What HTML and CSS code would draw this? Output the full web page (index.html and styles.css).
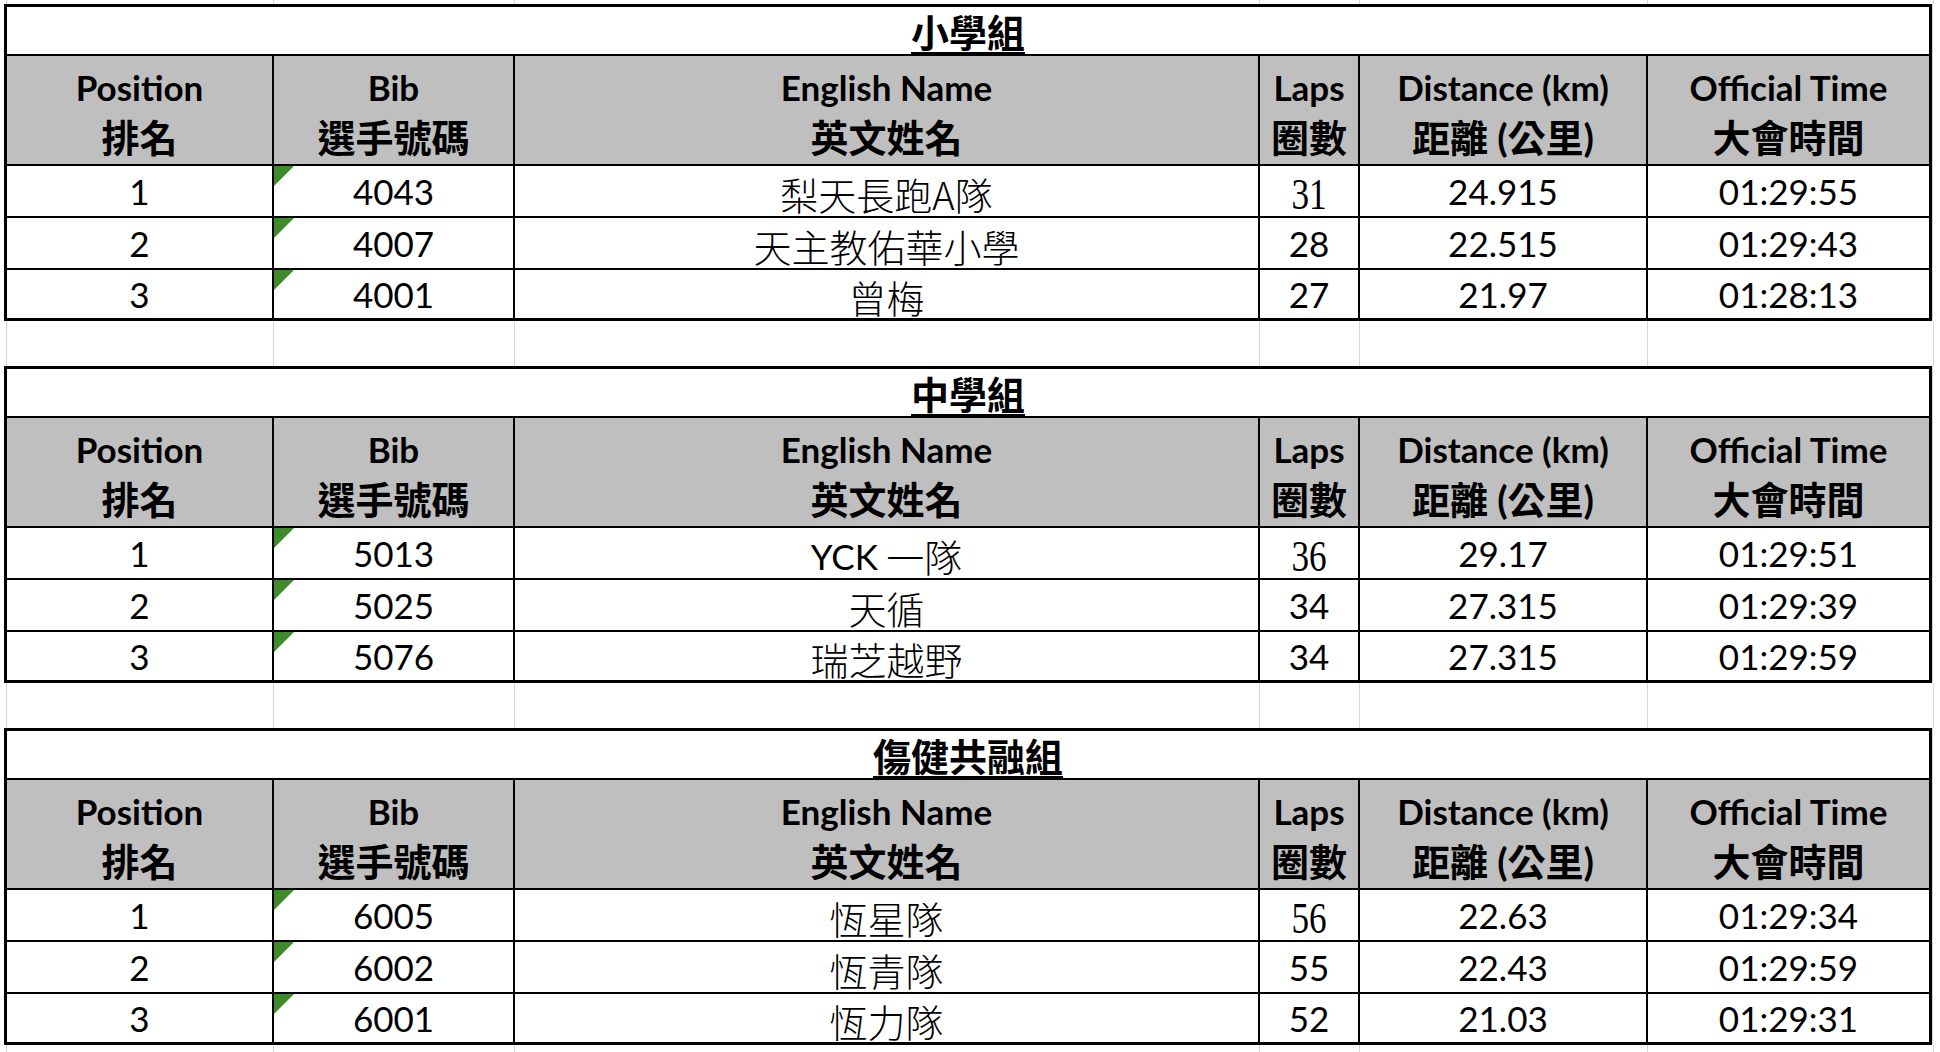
FILE: index.html
```html
<!DOCTYPE html>
<html lang="zh-Hant">
<head>
<meta charset="utf-8">
<title>Results</title>
<link rel="stylesheet" href="styles.css">
</head>
<body>
<div class="sheet">
  <div class="gap gap-top"><i></i><i></i><i></i><i></i><i></i><i></i><i></i><i></i></div>

  <section class="board">
    <div class="title"><span>小學組</span></div>
    <div class="hd"><div class="en">Position</div><div class="zh">排名</div></div>
    <div class="hd"><div class="en">Bib</div><div class="zh">選手號碼</div></div>
    <div class="hd"><div class="en">English Name</div><div class="zh">英文姓名</div></div>
    <div class="hd"><div class="en">Laps</div><div class="zh">圈數</div></div>
    <div class="hd"><div class="en">Distance (km)</div><div class="zh">距離 (公里)</div></div>
    <div class="hd"><div class="en">Official Time</div><div class="zh">大會時間</div></div>

    <div class="c">1</div><div class="c bib">4043</div><div class="c name">梨天長跑A隊</div><div class="c"><span class="serif">31</span></div><div class="c">24.915</div><div class="c">01:29:55</div>
    <div class="c">2</div><div class="c bib">4007</div><div class="c name">天主教佑華小學</div><div class="c">28</div><div class="c">22.515</div><div class="c">01:29:43</div>
    <div class="c">3</div><div class="c bib">4001</div><div class="c name">曾梅</div><div class="c">27</div><div class="c">21.97</div><div class="c">01:28:13</div>
  </section>

  <div class="gap"><i></i><i></i><i></i><i></i><i></i><i></i><i></i><i></i></div>

  <section class="board">
    <div class="title"><span>中學組</span></div>
    <div class="hd"><div class="en">Position</div><div class="zh">排名</div></div>
    <div class="hd"><div class="en">Bib</div><div class="zh">選手號碼</div></div>
    <div class="hd"><div class="en">English Name</div><div class="zh">英文姓名</div></div>
    <div class="hd"><div class="en">Laps</div><div class="zh">圈數</div></div>
    <div class="hd"><div class="en">Distance (km)</div><div class="zh">距離 (公里)</div></div>
    <div class="hd"><div class="en">Official Time</div><div class="zh">大會時間</div></div>

    <div class="c">1</div><div class="c bib">5013</div><div class="c name"><span class="latin">YCK</span>&nbsp;一隊</div><div class="c"><span class="serif">36</span></div><div class="c">29.17</div><div class="c">01:29:51</div>
    <div class="c">2</div><div class="c bib">5025</div><div class="c name">天循</div><div class="c">34</div><div class="c">27.315</div><div class="c">01:29:39</div>
    <div class="c">3</div><div class="c bib">5076</div><div class="c name">瑞芝越野</div><div class="c">34</div><div class="c">27.315</div><div class="c">01:29:59</div>
  </section>

  <div class="gap"><i></i><i></i><i></i><i></i><i></i><i></i><i></i><i></i></div>

  <section class="board">
    <div class="title"><span>傷健共融組</span></div>
    <div class="hd"><div class="en">Position</div><div class="zh">排名</div></div>
    <div class="hd"><div class="en">Bib</div><div class="zh">選手號碼</div></div>
    <div class="hd"><div class="en">English Name</div><div class="zh">英文姓名</div></div>
    <div class="hd"><div class="en">Laps</div><div class="zh">圈數</div></div>
    <div class="hd"><div class="en">Distance (km)</div><div class="zh">距離 (公里)</div></div>
    <div class="hd"><div class="en">Official Time</div><div class="zh">大會時間</div></div>

    <div class="c">1</div><div class="c bib">6005</div><div class="c name">恆星隊</div><div class="c"><span class="serif">56</span></div><div class="c">22.63</div><div class="c">01:29:34</div>
    <div class="c">2</div><div class="c bib">6002</div><div class="c name">恆青隊</div><div class="c">55</div><div class="c">22.43</div><div class="c">01:29:59</div>
    <div class="c">3</div><div class="c bib">6001</div><div class="c name">恆力隊</div><div class="c">52</div><div class="c">21.03</div><div class="c">01:29:31</div>
  </section>

  <div class="gap gap-bottom"><i></i><i></i><i></i><i></i><i></i><i></i><i></i><i></i></div>
</div>
</body>
</html>
```

FILE: styles.css
```css
html, body {
  margin: 0;
  padding: 0;
  background: #ffffff;
  overflow: hidden;
}

.sheet {
  width: 1940px;
  font-family: "Lato", "Noto Sans CJK TC", sans-serif;
  color: #000;
}

/* spreadsheet gridlines visible between the tables */
.gap {
  display: grid;
  grid-template-columns: 7px 267px 241px 745px 100px 288px 286px 6px;
  height: 45px;
}
.gap i {
  display: block;
  border-right: 1px solid #d6d6d6;
}
.gap i:last-child {
  border-right: none;
}
.gap-top { height: 4px; }
.gap-bottom { height: 7px; }

/* one results table */
.board {
  box-sizing: border-box;
  width: 1928px;
  margin-left: 4px;
  border: 3px solid #000;
  background: #000;
  display: grid;
  grid-template-columns: 265px 239px 743px 98px 286px 281px;
  grid-template-rows: 47px 108px 50px 50px 48px;
  gap: 2px;
  box-shadow: 1px 0 0 #d6d6d6;
}

.title {
  grid-column: 1 / -1;
  background: #fff;
  display: flex;
  align-items: center;
  justify-content: center;
  font-family: "Noto Sans CJK TC", sans-serif;
  font-weight: 700;
  font-size: 38px;
  line-height: 47px;
}
.title span {
  text-decoration: underline;
  text-decoration-thickness: 2px;
  text-underline-offset: 5px;
}

.hd {
  background: #bfbfbf;
  display: flex;
  flex-direction: column;
  align-items: center;
  justify-content: center;
  padding-top: 4px;
  box-sizing: border-box;
  white-space: nowrap;
}
.hd .en {
  font-family: "Lato", sans-serif;
  font-weight: 700;
  font-size: 35px;
  line-height: 50px;
}
.hd .zh {
  font-family: "Lato", "Noto Sans CJK TC", sans-serif;
  font-weight: 700;
  font-size: 38px;
  line-height: 50px;
}

.c {
  position: relative;
  background: #fff;
  display: flex;
  align-items: center;
  justify-content: center;
  font-family: "Lato", sans-serif;
  font-size: 35px;
  line-height: 50px;
  white-space: nowrap;
}

.name {
  font-family: "Noto Sans CJK TC", sans-serif;
  font-size: 38px;
  font-weight: 300;
  padding-top: 5px;
  box-sizing: border-box;
}
.name .latin {
  font-family: "Lato", sans-serif;
  font-size: 35px;
  font-weight: 400;
}

.serif {
  display: block;
  font-family: "Liberation Serif", serif;
  font-size: 44px;
  margin-top: 7px;
  transform: scaleX(0.8);
}

/* green error-indicator corner in the Bib cells */
.bib::before {
  content: "";
  position: absolute;
  left: 0;
  top: 0;
  width: 20px;
  height: 20px;
  background: #3f8a2b;
  clip-path: polygon(0 0, 100% 0, 0 100%);
}
```
